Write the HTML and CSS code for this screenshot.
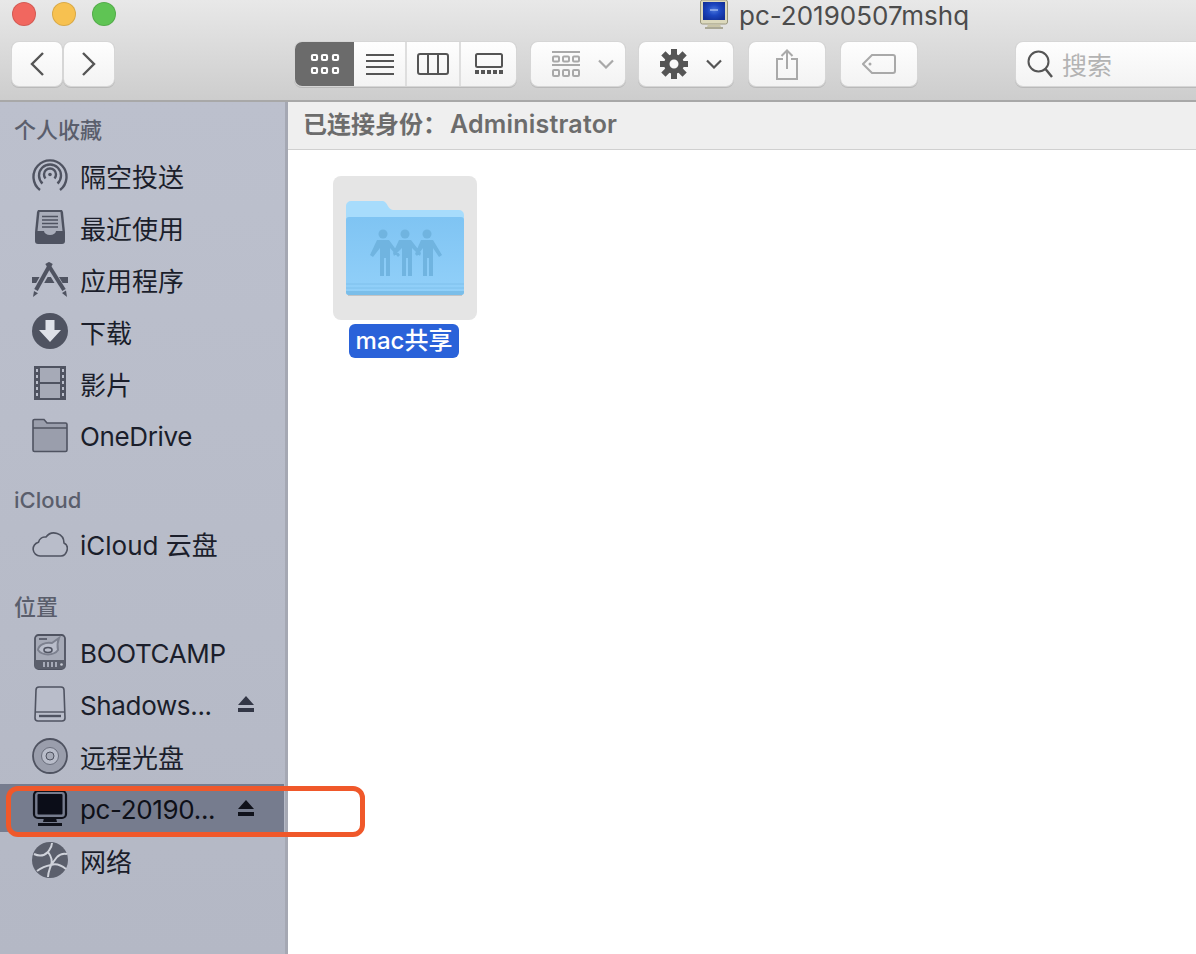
FILE: index.html
```html
<!DOCTYPE html>
<html lang="zh-CN">
<head>
    <meta charset="UTF-8">
    <title>pc-20190507mshq</title>
    <link rel="stylesheet" href="styles.css">
</head>
<body>
    <div class="window">
        <header class="toolbar">
            <div class="title-row">
                <div class="lights">
                    <span class="light red"></span>
                    <span class="light yellow"></span>
                    <span class="light green"></span>
                </div>
                <svg class="title-icon" viewBox="0 0 28 30">
                    <defs>
                        <radialGradient id="screenGlow" cx="0.5" cy="0.45" r="0.6">
                            <stop offset="0" stop-color="#4a76dc"/>
                            <stop offset="0.5" stop-color="#1c46c0"/>
                            <stop offset="1" stop-color="#12309a"/>
                        </radialGradient>
                    </defs>
                    <rect x="0.500" y="0" width="27" height="24" rx="2" fill="#dcd9bd" stroke="#99967e"/>
                    <rect x="3" y="2" width="22" height="18" fill="url(#screenGlow)"/>
                    <path d="M10 10h8" stroke="#9db6ee" stroke-width="1.500"/>
                    <path d="M8 24.500h12l1 2.500H7z" fill="#c9c5a8"/>
                    <path d="M5 27h18v2H5z" fill="#aaa896"/>
                </svg>
                <span class="title-text">pc-20190507mshq</span>
            </div>
            <div class="tools">
                <div class="nav-pair">
                    <div class="btn nav-btn">
                        <svg width="16" height="26" viewBox="0 0 16 26"><path d="M14 2 3 13l11 11" fill="none" stroke="#555" stroke-width="2.400"/></svg>
                    </div>
                    <div class="btn nav-btn">
                        <svg width="16" height="26" viewBox="0 0 16 26"><path d="m2 2 11 11L2 24" fill="none" stroke="#555" stroke-width="2.400"/></svg>
                    </div>
                </div>
                <div class="btn views">
                    <div class="view view-on">
                        <svg width="30" height="22" viewBox="0 0 30 22" fill="none" stroke="#fff" stroke-width="2.200">
                            <rect x="2" y="2" width="5" height="5" rx="1"/><rect x="12" y="2" width="5" height="5" rx="1"/><rect x="23" y="2" width="5" height="5" rx="1"/>
                            <rect x="2" y="15" width="5" height="5" rx="1"/><rect x="12" y="15" width="5" height="5" rx="1"/><rect x="23" y="15" width="5" height="5" rx="1"/>
                        </svg>
                    </div>
                    <div class="view view-list">
                        <svg width="28" height="22" viewBox="0 0 28 22" stroke="#555" stroke-width="2"><path d="M0 2h28M0 8h28M0 14h28M0 21h28"/></svg>
                    </div>
                    <div class="view view-cols">
                        <svg width="32" height="22" viewBox="0 0 32 22" fill="none" stroke="#555" stroke-width="2"><rect x="1" y="1" width="30" height="20" rx="2"/><path d="M11 1v20M21 1v20"/></svg>
                    </div>
                    <div class="view view-gallery">
                        <svg width="28" height="22" viewBox="0 0 28 22"><rect x="1" y="1" width="26" height="13" rx="1.500" fill="none" stroke="#555" stroke-width="2"/><path d="M0 17h4v4H0zM6 17h4v4H6zM12 17h4v4h-4zM18 17h4v4h-4zM24 17h4v4h-4z" fill="#555"/></svg>
                    </div>
                </div>
                <div class="btn arrange">
                    <svg width="28" height="26" viewBox="0 0 28 26" fill="none" stroke="#a9a9a9" stroke-width="2">
                        <path d="M0 1h28M0 14h28"/>
                        <rect x="1" y="5.500" width="6" height="5" rx="1"/><rect x="11" y="5.500" width="6" height="5" rx="1"/><rect x="21" y="5.500" width="6" height="5" rx="1"/>
                        <rect x="1" y="19" width="6" height="6" rx="1"/><rect x="11" y="19" width="6" height="6" rx="1"/><rect x="21" y="19" width="6" height="6" rx="1"/>
                    </svg>
                    <svg width="16" height="10" viewBox="0 0 16 10"><path d="m1 1.500 7 7 7-7" fill="none" stroke="#a9a9a9" stroke-width="2.200"/></svg>
                </div>
                <div class="btn action">
                    <svg width="28" height="30" viewBox="0 0 28 30">
                        <g fill="#555">
                            <path fill-rule="evenodd" d="M14 5a10 10 0 1 0 0 20 10 10 0 0 0 0-20zm0 5.500a4.500 4.500 0 1 1 0 9 4.500 4.500 0 0 1 0-9z"/>
                            <path d="M11 0h6v7h-6zM11 23h6v7h-6z"/>
                            <path d="M11 0h6v7h-6zM11 23h6v7h-6z" transform="rotate(45 14 15)"/>
                            <path d="M11 1h6v7h-6zM11 22h6v7h-6z" transform="rotate(90 14 15)"/>
                            <path d="M11 0h6v7h-6zM11 23h6v7h-6z" transform="rotate(135 14 15)"/>
                        </g>
                    </svg>
                    <svg width="16" height="10" viewBox="0 0 16 10"><path d="m1 1.500 7 7 7-7" fill="none" stroke="#555" stroke-width="2.200"/></svg>
                </div>
                <div class="btn share">
                    <svg width="22" height="31" viewBox="0 0 22 31" fill="none" stroke="#a9a9a9" stroke-width="2"><path d="M7 10H1v20h20V10h-6M11 20V2M5.500 7 11 1.500 16.500 7"/></svg>
                </div>
                <div class="btn tag">
                    <svg width="34" height="20" viewBox="0 0 34 20" fill="none" stroke="#a9a9a9" stroke-width="2"><path d="M10 1h21a2 2 0 0 1 2 2v14a2 2 0 0 1-2 2H10L1 10z"/><circle cx="8" cy="10" r="1.500" fill="#a9a9a9" stroke="none"/></svg>
                </div>
                <div class="btn search">
                    <svg width="26" height="28" viewBox="0 0 26 28" fill="none" stroke="#555" stroke-width="2"><circle cx="11.500" cy="11.500" r="10"/><path d="m18.500 19 6.500 8" stroke-width="2.400"/></svg>
                    <span class="search-text">搜索</span>
                </div>
            </div>
        </header>

        <div class="main">
            <aside class="sidebar">
                <h2 class="group-title first">个人收藏</h2>
                <ul class="list">
                    <li class="row">
                        <svg class="icon" viewBox="0 0 36 36" fill="none" stroke="#4f5361" stroke-width="2.400">
                            <path d="M8 33a16.500 16.500 0 1 1 20 0"/><path d="M10.500 26.500a11 11 0 1 1 15 0"/><path d="M13.500 21.500a6 6 0 1 1 9 0"/><circle cx="18" cy="17.500" r="1.800" fill="#4f5361" stroke="none"/>
                        </svg>
                        <span class="label">隔空投送</span>
                    </li>
                    <li class="row">
                        <svg class="icon" viewBox="0 0 36 36">
                            <path d="M6 1h24l1 2 2 20v9a3 3 0 0 1-3 3H6a3 3 0 0 1-3-3v-9L5 3z" fill="#4f5361"/>
                            <path d="M7.500 3h21l2 19H24a6 4 0 0 1-12 0H5.500z" fill="#a9adba"/>
                            <path d="M10 7.500h16M10 11h16M10 14.500h16M10 18h16" stroke="#4f5361" stroke-width="1.500"/>
                        </svg>
                        <span class="label">最近使用</span>
                    </li>
                    <li class="row">
                        <svg class="icon" viewBox="0 0 36 36">
                            <path d="M0 16h36v6H0z" fill="#4f5361"/>
                            <path d="M19 3 3 31M15 3l17 28" stroke="#b9bdca" stroke-width="7"/>
                            <path d="M19 2 4 29" stroke="#4f5361" stroke-width="4"/>
                            <path d="m15 2 17 27" stroke="#4f5361" stroke-width="4"/>
                            <path d="M1 36l1-6 4 2.200zM35 36l-5-4 4-2.400z" fill="#4f5361"/>
                        </svg>
                        <span class="label">应用程序</span>
                    </li>
                    <li class="row">
                        <svg class="icon" viewBox="0 0 36 36">
                            <circle cx="18" cy="18" r="18" fill="#4f5361"/>
                            <path d="M13.500 7h9v10H29L18 29 7 17h6.500z" fill="#dfe1e8"/>
                        </svg>
                        <span class="label">下载</span>
                    </li>
                    <li class="row">
                        <svg class="icon" viewBox="0 0 36 36">
                            <rect x="2" y="1" width="32" height="34" fill="#4f5361"/>
                            <rect x="8" y="3" width="20" height="14" fill="#a6aab7"/>
                            <rect x="8" y="19" width="20" height="14" fill="#a6aab7"/>
                            <path d="M4 4h2v3H4zM4 10h2v3H4zM4 16h2v3H4zM4 22h2v3H4zM4 28h2v3H4zM30 4h2v3h-2zM30 10h2v3h-2zM30 16h2v3h-2zM30 22h2v3h-2zM30 28h2v3h-2z" fill="#b9bdca"/>
                        </svg>
                        <span class="label">影片</span>
                    </li>
                    <li class="row">
                        <svg class="icon" viewBox="0 0 36 36">
                            <path d="M1 8V4a1.500 1.500 0 0 1 1.500-1.500H12L15 6h18.500A1.500 1.500 0 0 1 35 7.500V33a1.500 1.500 0 0 1-1.500 1.500h-31A1.500 1.500 0 0 1 1 33z" fill="#9a9eac" stroke="#4f5361" stroke-width="1.600"/>
                            <path d="M1 11h34" stroke="#4f5361" stroke-width="1.600"/>
                        </svg>
                        <span class="label latin">OneDrive</span>
                    </li>
                </ul>
                <h2 class="group-title cloud">iCloud</h2>
                <ul class="list">
                    <li class="row">
                        <svg class="icon" viewBox="0 0 36 36">
                            <path d="M8 31a7 7 0 0 1-1.500-13.800A7 7 0 0 1 14 12a10 10 0 0 1 18 6c3 1.500 4 4 3 7.500-1 3.500-3.500 5.500-6 5.500z" fill="#b9bdca" stroke="#4f5361" stroke-width="1.600"/>
                        </svg>
                        <span class="label">iCloud 云盘</span>
                    </li>
                </ul>
                <h2 class="group-title places">位置</h2>
                <ul class="list">
                    <li class="row">
                        <svg class="icon" viewBox="0 0 36 36">
                            <rect x="3" y="1" width="30" height="34" rx="3.500" fill="#a6aab7" stroke="#4f5361" stroke-width="1.800"/>
                            <path d="M3 26h30v6a3 3 0 0 1-3 3H6a3 3 0 0 1-3-3z" fill="#5b5f6c"/>
                            <path d="M7 5h8" stroke="#4f5361" stroke-width="1.600"/>
                            <path d="M6 16a11 8 0 0 1 14-7l7-5c-2 5-2 7-1 12a11 7.500 0 0 1-20 0z" fill="#b9bdca" stroke="#7c808e" stroke-width="2"/>
                            <ellipse cx="16" cy="16" rx="4" ry="2.500" fill="none" stroke="#4f5361" stroke-width="1.600"/>
                            <path d="M12 28v5M16 28v5M20 28v5M24 28v5" stroke="#a6aab7" stroke-width="2"/>
                            <circle cx="29.500" cy="30.500" r="1.300" fill="#c9ccd5"/>
                        </svg>
                        <span class="label latin">BOOTCAMP</span>
                    </li>
                    <li class="row">
                        <svg class="icon" viewBox="0 0 36 36">
                            <path d="M7 1h22a3 3 0 0 1 3 3l1 28a3 3 0 0 1-3 3H6a3 3 0 0 1-3-3L4 4a3 3 0 0 1 3-3z" fill="#b9bdca" stroke="#4f5361" stroke-width="1.600"/>
                            <path d="M3 26h30" stroke="#4f5361" stroke-width="1.400"/>
                            <path d="M7 30h22" stroke="#4f5361" stroke-width="2.400"/>
                        </svg>
                        <span class="label latin">Shadows...</span>
                        <svg class="eject" viewBox="0 0 18 18"><path d="M9 1 17 10H1zM1 13h16v4H1z" fill="#333746"/></svg>
                    </li>
                    <li class="row">
                        <svg class="icon" viewBox="0 0 36 36">
                            <circle cx="18" cy="18" r="17" fill="#9a9eac" stroke="#4f5361" stroke-width="1.800"/>
                            <circle cx="18" cy="18" r="8.500" fill="#b9bdca" stroke="#6a6e7c"/>
                            <circle cx="18" cy="18" r="4" fill="#a6aab7" stroke="#4f5361"/>
                        </svg>
                        <span class="label">远程光盘</span>
                    </li>
                    <li class="row row-on">
                        <svg class="icon" viewBox="0 0 36 36">
                            <rect x="2" y="1" width="32" height="27" rx="4" fill="#767c8e" stroke="#0f111a" stroke-width="2.200"/>
                            <rect x="5.500" y="4" width="25" height="20.500" rx="1" fill="#0b0d18"/>
                            <path d="M12 28h12l1 4H11zM6 33h24v3H6z" fill="#0f111a"/>
                        </svg>
                        <span class="label latin dark">pc-20190...</span>
                        <svg class="eject" viewBox="0 0 18 18"><path d="M9 1 17 10H1zM1 13h16v4H1z" fill="#0f111a"/></svg>
                    </li>
                    <li class="row">
                        <svg class="icon" viewBox="0 0 36 36">
                            <circle cx="18" cy="18" r="18" fill="#5b5f6c"/>
                            <path d="M2 12c6 3 10 2 14-2 2-3 4-5 4-9M16 10c3 4 5 8 3 13-1 4-3 7-3 12M19 23c5-2 10 0 15 4M25 15c3-3 6-4 10-3M5 29c4-3 8-5 14-6M25 15l-6 8" fill="none" stroke="#cfd2da" stroke-width="2"/>
                        </svg>
                        <span class="label">网络</span>
                    </li>
                </ul>
            </aside>

            <section class="content">
                <div class="status">
                    <span class="status-text">已连接身份：<span class="status-user">Administrator</span></span>
                </div>
                <div class="files">
                    <div class="file">
                        <div class="tile">
                            <svg class="folder" viewBox="0 0 120 96">
                                <defs>
                                    <linearGradient id="folderBody" x1="0" y1="0" x2="0" y2="1">
                                        <stop offset="0" stop-color="#7fc4f3"/>
                                        <stop offset="1" stop-color="#92d0f9"/>
                                    </linearGradient>
                                </defs>
                                <path d="M3 95.500h114" stroke="#c4c4c4" stroke-width="1.500"/>
                                <path d="M1 6a5 5 0 0 1 5-5h32c4 0 5 9 10 9h66a5 5 0 0 1 5 5v20H1z" fill="#a7dcfc"/>
                                <path d="M1 20a3 3 0 0 1 3-3h112a3 3 0 0 1 3 3v72a3 3 0 0 1-3 3H4a3 3 0 0 1-3-3z" fill="url(#folderBody)"/>
                                <path d="M1 84h118M1 88h118" stroke="#7fc0ec" stroke-width="1"/>
                                <path d="M1 91h118v1a3 3 0 0 1-3 3H4a3 3 0 0 1-3-3z" fill="#7bbee9"/>
                                <g fill="#70b4e0">
                                    <circle cx="38" cy="34" r="4.500"/><circle cx="60" cy="34" r="4.500"/><circle cx="82" cy="34" r="4.500"/>
                                    <path d="M32 40h12l11 15-2 2-8-9v28h-4V58h-2v18h-4V48l-7 9-3-2zM54 40h12l10 13-1 3-8-8v28h-4V58h-2v18h-4V48l-8 8-1-3zM76 40h12l9 15-3 2-6-9v28h-4V58h-2v18h-4V48l-6 8-2-2z"/>
                                </g>
                            </svg>
                        </div>
                        <span class="file-name">mac共享</span>
                    </div>
                </div>
            </section>
        </div>
        <div class="callout"></div>
    </div>
</body>
</html>
```

FILE: styles.css
```css
* {
    box-sizing: border-box;
    margin: 0;
    padding: 0;
}
body {
    width: 1196px;
    height: 954px;
    overflow: hidden;
    background-color: white;
    font-family: Inter, "Noto Sans CJK SC", sans-serif;
}
.window {
    position: relative;
    width: 1196px;
    height: 954px;
    display: flex;
    flex-direction: column;
}

/* toolbar */
.toolbar {
    height: 102px;
    flex-shrink: 0;
    background: linear-gradient(#e8e8e8, #cdcdcd);
    border-bottom: 2px solid #a8a8a8;
}
.title-row {
    height: 42px;
    display: flex;
    align-items: flex-start;
    padding-left: 12px;
}
.lights {
    display: flex;
    gap: 16px;
    margin-top: 2px;
}
.light {
    width: 24px;
    height: 24px;
    border-radius: 50%;
    border: 1px solid rgba(0, 0, 0, 0.12);
}
.red { background-color: #f1675f; }
.yellow { background-color: #f7c150; }
.green { background-color: #5fc454; }
.title-icon {
    width: 28px;
    height: 30px;
    margin-left: 584px;
}
.title-text {
    margin-left: 11px;
    font-size: 26px;
    line-height: 31px;
    color: #4c4c4c;
}
.tools {
    display: flex;
    height: 44px;
    padding-left: 12px;
}
.btn {
    height: 44px;
    flex-shrink: 0;
    display: flex;
    align-items: center;
    justify-content: center;
    background: linear-gradient(#fefefe, #f3f3f3);
    border-radius: 7px;
    box-shadow: 0 0 0 1px #d6d6d6, 0 1px 0 1px #b9b9b9;
}
.nav-pair {
    display: flex;
    gap: 2px;
    flex-shrink: 0;
}
.nav-btn { width: 50px; }
.views {
    width: 221px;
    margin-left: 181px;
    justify-content: flex-start;
    overflow: hidden;
}
.view {
    height: 44px;
    display: flex;
    align-items: center;
    justify-content: center;
    border-right: 2px solid #dedede;
}
.view-on {
    width: 59px;
    background-color: #6b6b6b;
    border-right: none;
}
.view-list { width: 53px; }
.view-cols { width: 54px; }
.view-gallery {
    width: 55px;
    border-right: none;
}
.arrange {
    width: 94px;
    margin-left: 15px;
    justify-content: flex-start;
    padding-left: 21px;
    gap: 18px;
}
.action {
    width: 94px;
    margin-left: 14px;
    justify-content: flex-start;
    padding-left: 21px;
    gap: 18px;
}
.share {
    width: 76px;
    margin-left: 16px;
}
.tag {
    width: 76px;
    margin-left: 16px;
}
.search {
    width: 220px;
    margin-left: 99px;
    justify-content: flex-start;
    padding-left: 11px;
    gap: 9px;
}
.search-text {
    font-size: 25px;
    color: #b3b3b3;
}

/* sidebar */
.main {
    flex: 1;
    display: flex;
    min-height: 0;
}
.sidebar {
    width: 288px;
    flex-shrink: 0;
    background: linear-gradient(#bcc0cd, #b4b8c5);
    border-right: 3px solid #a5a8b3;
}
.group-title {
    height: 32px;
    padding-left: 14px;
    font-size: 22px;
    line-height: 32px;
    font-weight: 500;
    color: #5a5e6c;
}
.group-title.first {
    margin-top: 12px;
    margin-bottom: 5px;
}
.group-title.cloud {
    margin-top: 25px;
    margin-bottom: 3px;
}
.group-title.places {
    margin-top: 24px;
    margin-bottom: 5px;
}
.list {
    list-style: none;
    display: flex;
    flex-direction: column;
    gap: 4px;
}
.row {
    height: 48px;
    display: flex;
    align-items: center;
    padding-left: 32px;
}
.row-on {
    margin-right: 1px;
    background-color: #767c8e;
}
.icon {
    width: 36px;
    height: 36px;
    flex-shrink: 0;
}
.label {
    margin-left: 12px;
    font-size: 26px;
    color: #1b1e2b;
    white-space: nowrap;
}
.latin {
    margin-top: 2px;
    letter-spacing: -0.35px;
}
.dark {
    color: #0e1018;
}
.eject {
    width: 18px;
    height: 18px;
    margin-left: auto;
    margin-right: 30px;
}
.row-on .eject {
    margin-right: 29px;
}

/* content */
.content {
    flex: 1;
    display: flex;
    flex-direction: column;
}
.status {
    height: 48px;
    display: flex;
    align-items: center;
    padding: 0 0 6px 15px;
    background-color: #efefef;
    border-bottom: 1px solid #d0d0d0;
}
.status-text {
    font-size: 24px;
    font-weight: 600;
    color: #6c6c6c;
}
.status-user {
    font-size: 25px;
    margin-left: 3px;
    letter-spacing: 0.2px;
}
.files {
    padding: 26px 0 0 45px;
}
.file {
    width: 144px;
    display: flex;
    flex-direction: column;
    align-items: center;
    gap: 4px;
}
.tile {
    width: 144px;
    height: 144px;
    display: flex;
    align-items: center;
    justify-content: center;
    background-color: #e5e5e5;
    border-radius: 8px;
}
.folder {
    width: 120px;
    height: 96px;
}
.file-name {
    height: 34px;
    padding: 0 7px;
    margin-left: -2px;
    background-color: #2a62d9;
    border-radius: 6px;
    font-size: 24px;
    line-height: 34px;
    font-weight: 500;
    color: white;
}

/* red marker drawn over the screenshot */
.callout {
    position: absolute;
    left: 6px;
    top: 786px;
    width: 359px;
    height: 51px;
    border: 5px solid #f0582a;
    border-radius: 12px;
}
```
